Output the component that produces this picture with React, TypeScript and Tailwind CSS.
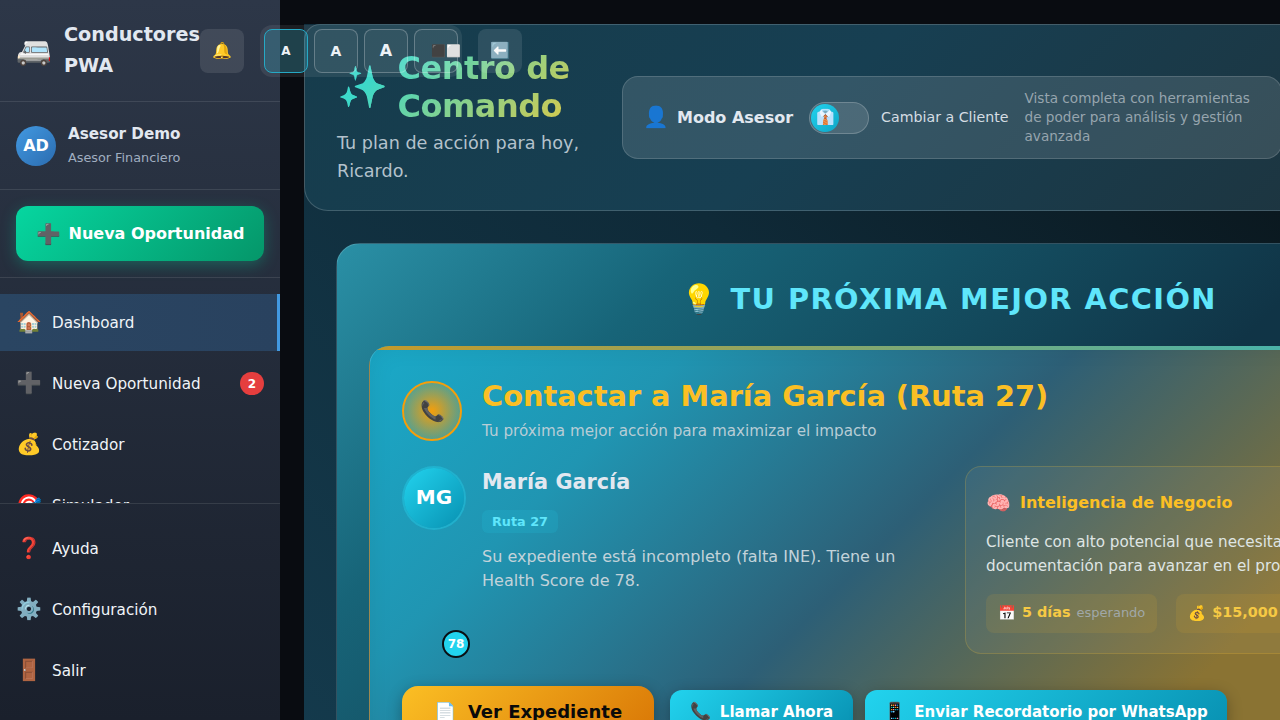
import React from "react";

function NavItem({ icon, label, active, badge }: { icon: string; label: string; active?: boolean; badge?: string }) {
  return (
    <div className={`flex items-center h-[57px] mb-1 px-4 shrink-0 ${active ? "border-r-[3px] border-[#4299e1] bg-[linear-gradient(90deg,#2a4562,#29425f)]" : ""}`}>
      <span className="w-6 text-center text-[20.8px] mr-3 leading-none text-[#e2e8f0]">{icon}</span>
      <span className="text-[15.2px] text-[#f0f4f8] flex-1 pt-[2px]">{label}</span>
      {badge && (
        <span className="w-6 h-[23px] rounded-full bg-[#e53e3e] text-white text-[12px] font-bold flex items-center justify-center">{badge}</span>
      )}
    </div>
  );
}

function FontBtn({ size, active }: { size: string; active?: boolean }) {
  return (
    <div className={`w-11 h-11 rounded-lg border flex items-center justify-center font-bold text-[#edf2f7] ${size} ${active ? "border-[#26a9c5] bg-[rgba(38,169,197,0.25)]" : "border-[rgba(255,255,255,0.25)] bg-[rgba(255,255,255,0.05)]"}`}>
      A
    </div>
  );
}

export default function App() {
  return (
    <div className="flex w-[1280px] h-[720px] overflow-hidden bg-[#090c11] font-['DejaVu_Sans',sans-serif] relative">
      <aside className="w-[280px] h-full shrink-0 flex flex-col bg-[linear-gradient(180deg,#2d3748,#1a202c)]">
        <div className="h-[102px] shrink-0 border-b border-[rgba(255,255,255,0.1)] flex items-center pl-4 gap-3">
          <span className="text-[28.8px] leading-none">🚐</span>
          <span className="text-[19.2px] font-bold text-[#e2e8f0] leading-[31px] w-[130px] mb-[2px]">Conductores PWA</span>
        </div>
        <div className="h-[88px] shrink-0 border-b border-[rgba(255,255,255,0.1)] flex items-center pl-4 gap-3">
          <div className="w-10 h-10 rounded-full bg-[linear-gradient(135deg,#4299e1,#2b6cb0)] text-white font-bold text-[16px] flex items-center justify-center">AD</div>
          <div className="flex flex-col mt-[2px]">
            <span className="text-[15.2px] font-bold text-[#e2e8f0] leading-[22px]">Asesor Demo</span>
            <span className="text-[12.8px] text-[#a0aec0] leading-[24px] pt-[1px]">Asesor Financiero</span>
          </div>
        </div>
        <div className="h-[88px] shrink-0 border-b border-[rgba(255,255,255,0.1)] px-4 pt-4">
          <div className="h-[55px] rounded-xl bg-[linear-gradient(135deg,#06d6a0,#059669)] shadow-[0_4px_15px_rgba(6,214,160,0.3)] flex items-center justify-center gap-2 text-white font-bold text-[16px]">
            <span className="text-[20px] leading-none">➕</span>
            <span>Nueva Oportunidad</span>
          </div>
        </div>
        <nav className="flex-1 min-h-0 overflow-hidden pt-4 flex flex-col">
          <NavItem icon="🏠" label="Dashboard" active />
          <NavItem icon="➕" label="Nueva Oportunidad" badge="2" />
          <NavItem icon="💰" label="Cotizador" />
          <NavItem icon="🎯" label="Simulador" />
        </nav>
        <div className="shrink-0 border-t border-[rgba(255,255,255,0.1)] pt-4 pb-[17px] flex flex-col">
          <NavItem icon="❓" label="Ayuda" />
          <NavItem icon="⚙️" label="Configuración" />
          <NavItem icon="🚪" label="Salir" />
        </div>
      </aside>

      <main className="flex-1 min-w-0 pl-6 pt-6 overflow-hidden">
        <div className="w-[1320px] h-[900px] bg-[linear-gradient(45deg,#153d50,#0f2a38_50%,#0a161c_80%)]">
          <header className="w-[1010px] h-[187px] rounded-b-3xl rounded-t-2xl border border-[rgba(255,255,255,0.18)] bg-[linear-gradient(135deg,#163c4c,#173f52_50%,#1d3540)] flex items-start px-8 pt-6 gap-8">
            <div className="w-[253px] shrink-0">
              <h1 className="flex items-center gap-[10px] text-[32px] font-bold tracking-[-0.5px] leading-[38.4px] bg-[linear-gradient(135deg,#38d9d0,#3dd8c8_20%,#e8c83f)] bg-clip-text text-transparent">
                <span className="text-[41px] leading-none">✨</span>
                <span>Centro de Comando</span>
              </h1>
              <p className="text-[17.6px] leading-[28px] text-[#b4c2cc] mt-[3px]">Tu plan de acción para hoy, Ricardo.</p>
            </div>
            <div className="w-[660px] h-[83px] mt-[27px] shrink-0 rounded-2xl border border-[rgba(255,255,255,0.15)] bg-[rgba(255,255,255,0.12)] flex items-center pl-5 pr-6">
              <span className="text-[20.8px] leading-none mr-2 text-[#3182ce]">👤</span>
              <span className="text-[16px] font-bold text-[#e2e8f0] mr-4 whitespace-nowrap">Modo Asesor</span>
              <div className="w-[60px] h-8 rounded-full bg-[rgba(255,255,255,0.12)] border border-[rgba(255,255,255,0.2)] flex items-center px-[1px] mr-3 shrink-0">
                <div className="w-7 h-7 rounded-full bg-[linear-gradient(135deg,#22d3ee,#0ea5c6)] flex items-center justify-center text-[15px] leading-none">👔</div>
              </div>
              <span className="text-[14.2px] text-[#d5dde3] whitespace-nowrap mr-4">Cambiar a Cliente</span>
              <span className="text-[13.6px] leading-[19px] text-[#97a5ae] w-[240px] shrink-0">Vista completa con herramientas de poder para análisis y gestión avanzada</span>
            </div>
          </header>

          <section className="mt-8 ml-8 w-[1226px] h-[600px] rounded-3xl border border-[rgba(255,255,255,0.15)] bg-[linear-gradient(135deg,#2a90a6,#176478_20%,#103446_55%)] px-8 pt-[33px] overflow-hidden">
            <h2 className="flex items-center justify-center gap-3 text-[28.8px] font-bold tracking-[1.44px] text-[#5fe6fb] h-[45px]">
              <span>💡</span>
              <span>TU PRÓXIMA MEJOR ACCIÓN</span>
            </h2>
            <div className="mt-[24px] relative rounded-[20px] border border-[rgba(255,255,255,0.15)] border-t-0 overflow-hidden bg-[linear-gradient(135deg,#1aa9c8,#2095b2_20%,#2d5f76_44%,#8a7333_72%,#8a7333)] shadow-[inset_0_0_24px_rgba(0,0,0,0.08)] h-[460px] w-[1158px]">
              <div className="h-1 bg-[linear-gradient(90deg,#c49a2a,#4cb3a8_78%)]"></div>
              <div className="px-8 pt-[30px]">
                <div className="flex items-start gap-5">
                  <div className="w-[60px] h-[60px] mt-px shrink-0 rounded-full border-2 border-[#f59e0b] bg-[radial-gradient(circle,#f59e0b,transparent)] flex items-center justify-center text-[20px] leading-none">📞</div>
                  <div>
                    <div className="text-[28.8px] font-bold text-[#fbbf24] leading-[32px] whitespace-nowrap">Contactar a María García (Ruta 27)</div>
                    <div className="text-[15.2px] text-[#b8cdd6] leading-[24px] mt-[7px]">Tu próxima mejor acción para maximizar el impacto</div>
                  </div>
                </div>
                <div className="flex mt-[23px]">
                  <div className="relative w-20 shrink-0 h-[188px]">
                    <div className="w-[60px] h-[60px] mt-[2px] ml-[2px] pb-[2px] rounded-full bg-[linear-gradient(135deg,#22d3ee,#0891b2)] shadow-[0_0_0_2px_rgba(34,211,238,0.4)] text-white font-bold text-[20px] flex items-center justify-center">MG</div>
                    <div className="absolute left-10 top-[164px] w-7 h-7 rounded-full bg-[#22d3ee] border-2 border-[#0a0f14] text-white text-[12px] font-bold flex items-center justify-center">78</div>
                  </div>
                  <div className="w-[440px] shrink-0 pt-px">
                    <div className="text-[20.8px] font-bold text-[#e2e8f0] leading-[30px]">María García</div>
                    <div className="inline-block mt-[13px] h-[23px] px-[10px] rounded-md bg-[rgba(34,211,238,0.15)] text-[#5fe6fb] text-[12.8px] font-bold leading-[23px]">Ruta 27</div>
                    <p className="text-[16px] leading-[24px] text-[#c3d3da] mt-[12px]">Su expediente está incompleto (falta INE). Tiene un Health Score de 78.</p>
                  </div>
                  <div className="ml-[43px] w-[500px] h-[188px] shrink-0 rounded-2xl border border-[rgba(251,191,36,0.2)] bg-[rgba(255,255,255,0.05)] p-5">
                    <div className="flex items-center gap-[9px] text-[16px] font-bold text-[#fbbf24] h-[32px]">
                      <span className="text-[20px] leading-none">🧠</span>
                      <span>Inteligencia de Negocio</span>
                    </div>
                    <p className="text-[15.2px] leading-[24px] text-[#dfe5e4] mt-[11px] w-[400px]">Cliente con alto potencial que necesita documentación para avanzar en el proceso</p>
                    <div className="flex gap-[19px] mt-[16px]">
                      <div className="flex items-center gap-[6px] h-[39px] px-3 rounded-lg bg-[rgba(251,191,36,0.1)] text-[14.4px]">
                        <span className="leading-none">📅</span>
                        <span className="font-bold text-[#f6c944] pb-[2px]">5 días</span>
                        <span className="text-[#a0a8a8] text-[13px] pb-[2px]">esperando</span>
                      </div>
                      <div className="flex items-center gap-[6px] h-[39px] px-3 rounded-lg bg-[rgba(251,191,36,0.1)] text-[14.4px]">
                        <span className="leading-none">💰</span>
                        <span className="font-bold text-[#f6c944] pb-[2px]">$15,000</span>
                      </div>
                    </div>
                  </div>
                </div>
                <div className="flex items-start mt-[32px]">
                  <div className="w-[252px] h-[50px] rounded-2xl bg-[linear-gradient(135deg,#fbbf24,#d97706)] flex items-center justify-center gap-3 text-[#0a0a0a] font-bold text-[18px] mr-4 shadow-[0_4px_15px_rgba(0,0,0,0.3)]">
                    <span>📄</span><span>Ver Expediente</span>
                  </div>
                  <div className="w-[183px] mt-1 h-[44px] rounded-xl bg-[linear-gradient(135deg,#22d3ee,#0891b2)] flex items-center justify-center gap-[9px] text-white font-bold text-[15px] mr-3 shadow-[0_4px_15px_rgba(0,0,0,0.3)]">
                    <span className="text-[17px]">📞</span><span>Llamar Ahora</span>
                  </div>
                  <div className="w-[362px] mt-1 h-[44px] rounded-xl bg-[linear-gradient(135deg,#22d3ee,#0891b2)] flex items-center justify-center gap-[9px] text-white font-bold text-[15px] shadow-[0_4px_15px_rgba(0,0,0,0.3)]">
                    <span className="text-[17px]">📱</span><span>Enviar Recordatorio por WhatsApp</span>
                  </div>
                </div>
              </div>
            </div>
          </section>
        </div>
      </main>

      <div className="absolute left-[200px] top-[29px] w-11 h-11 rounded-lg bg-[rgba(255,255,255,0.1)] flex items-center justify-center text-[16px] leading-none">🔔</div>
      <div className="absolute left-[260px] top-[25px] h-[52px] w-[202px] rounded-xl bg-[rgba(255,255,255,0.08)] flex items-center gap-[6px] px-1">
        <FontBtn size="text-[12px]" active />
        <FontBtn size="text-[14px]" />
        <FontBtn size="text-[16px]" />
        <div className="w-11 h-11 rounded-lg border border-[rgba(255,255,255,0.25)] bg-[rgba(255,255,255,0.05)] flex items-center pl-4 text-[12px] leading-none whitespace-nowrap">⬛⬜</div>
      </div>
      <div className="absolute left-[478px] top-[29px] w-11 h-11 rounded-lg bg-[rgba(255,255,255,0.1)] flex items-center justify-center text-[16px] leading-none">⬅️</div>
    </div>
  );
}
